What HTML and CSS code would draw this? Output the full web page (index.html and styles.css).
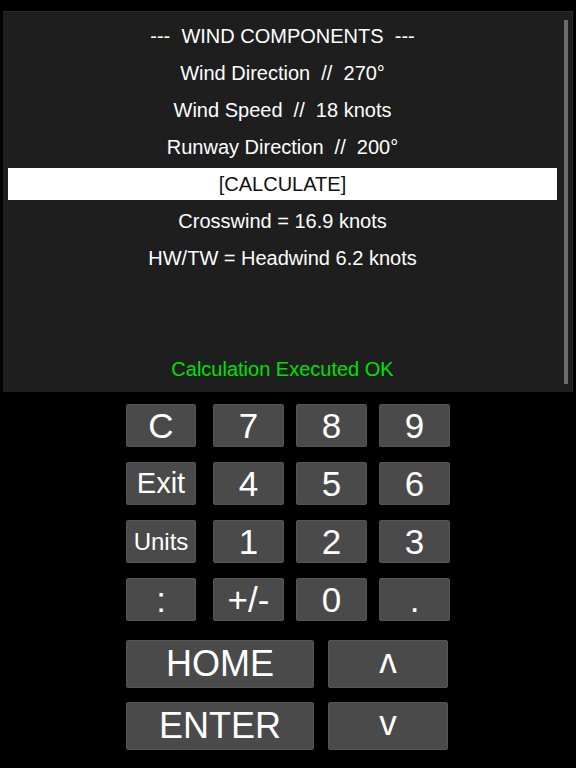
FILE: index.html
```html
<!DOCTYPE html>
<html lang="en">
<head>
    <meta charset="UTF-8">
    <meta name="viewport" content="width=device-width, initial-scale=1.0">
    <title>Wind Components</title>
    <link rel="stylesheet" href="styles.css">
</head>
<body>
    <div class="screen">
        <div class="lines">
            <div class="line">---&nbsp; WIND COMPONENTS &nbsp;---</div>
            <div class="line">Wind Direction &nbsp;// &nbsp;270°</div>
            <div class="line">Wind Speed &nbsp;// &nbsp;18 knots</div>
            <div class="line">Runway Direction &nbsp;// &nbsp;200°</div>
            <div class="line selected">[CALCULATE]</div>
            <div class="line">Crosswind = 16.9 knots</div>
            <div class="line">HW/TW = Headwind 6.2 knots</div>
            <div class="line"></div>
            <div class="line"></div>
            <div class="line status">Calculation Executed OK</div>
        </div>
        <div class="scrollbar"></div>
    </div>

    <div class="keypad">
        <div class="row">
            <button class="key side">C</button>
            <button class="key">7</button>
            <button class="key">8</button>
            <button class="key">9</button>
        </div>
        <div class="row">
            <button class="key side word">Exit</button>
            <button class="key">4</button>
            <button class="key">5</button>
            <button class="key">6</button>
        </div>
        <div class="row">
            <button class="key side small">Units</button>
            <button class="key">1</button>
            <button class="key">2</button>
            <button class="key">3</button>
        </div>
        <div class="row">
            <button class="key side">:</button>
            <button class="key">+/-</button>
            <button class="key">0</button>
            <button class="key">.</button>
        </div>
        <div class="row big first">
            <button class="key wide">HOME</button>
            <button class="key arrow">ʌ</button>
        </div>
        <div class="row big">
            <button class="key wide">ENTER</button>
            <button class="key arrow">v</button>
        </div>
    </div>
</body>
</html>
```

FILE: styles.css
```css
/* Base */
body {
    margin: 0;
    background-color: #000;
    color: #fff;
    font-family: 'Liberation Sans', Arial, sans-serif;
}

/* Display */
.screen {
    display: flex;
    margin: 11px 3px 0 3px;
    height: 381px;
    box-sizing: border-box;
    padding: 8px 0 0 5px;
    background-color: #1e1e1e;
    border-top: 1px solid #2a2a2a;
    border-right: 1px solid #2a2a2a;
}

.lines {
    flex: 1;
    display: flex;
    flex-direction: column;
    gap: 5px;
}

.line {
    height: 32px;
    line-height: 32px;
    font-size: 20px;
    text-align: center;
    white-space: nowrap;
}

.selected {
    background-color: #fff;
    color: #111;
}

.status {
    color: #00e000;
}

.scrollbar {
    width: 4px;
    height: 364px;
    margin-left: 7px;
    margin-right: 4px;
    background-color: #6b6b6b;
}

/* Keypad */
.keypad {
    display: flex;
    flex-direction: column;
    gap: 15px;
    margin-top: 12px;
    padding-left: 126px;
}

.row {
    display: flex;
    gap: 12px;
}

.key {
    width: 71px;
    height: 43px;
    padding: 0;
    border: 1px solid #555;
    border-radius: 2px;
    background-color: #4a4a4a;
    color: #fff;
    font-family: 'Liberation Sans', Arial, sans-serif;
    font-size: 35px;
    line-height: 41px;
}

.side {
    width: 70px;
    margin-right: 5px;
}

.word {
    font-size: 29px;
}

.small {
    font-size: 24px;
}

.row.big {
    gap: 14px;
    margin-top: -1px;
}

.row.big.first {
    margin-top: 4px;
}

.wide {
    width: 188px;
    height: 48px;
    font-size: 36px;
    line-height: 46px;
}

.arrow {
    width: 120px;
    height: 48px;
    padding-bottom: 6px;
    font-size: 35px;
    line-height: 40px;
}
```
